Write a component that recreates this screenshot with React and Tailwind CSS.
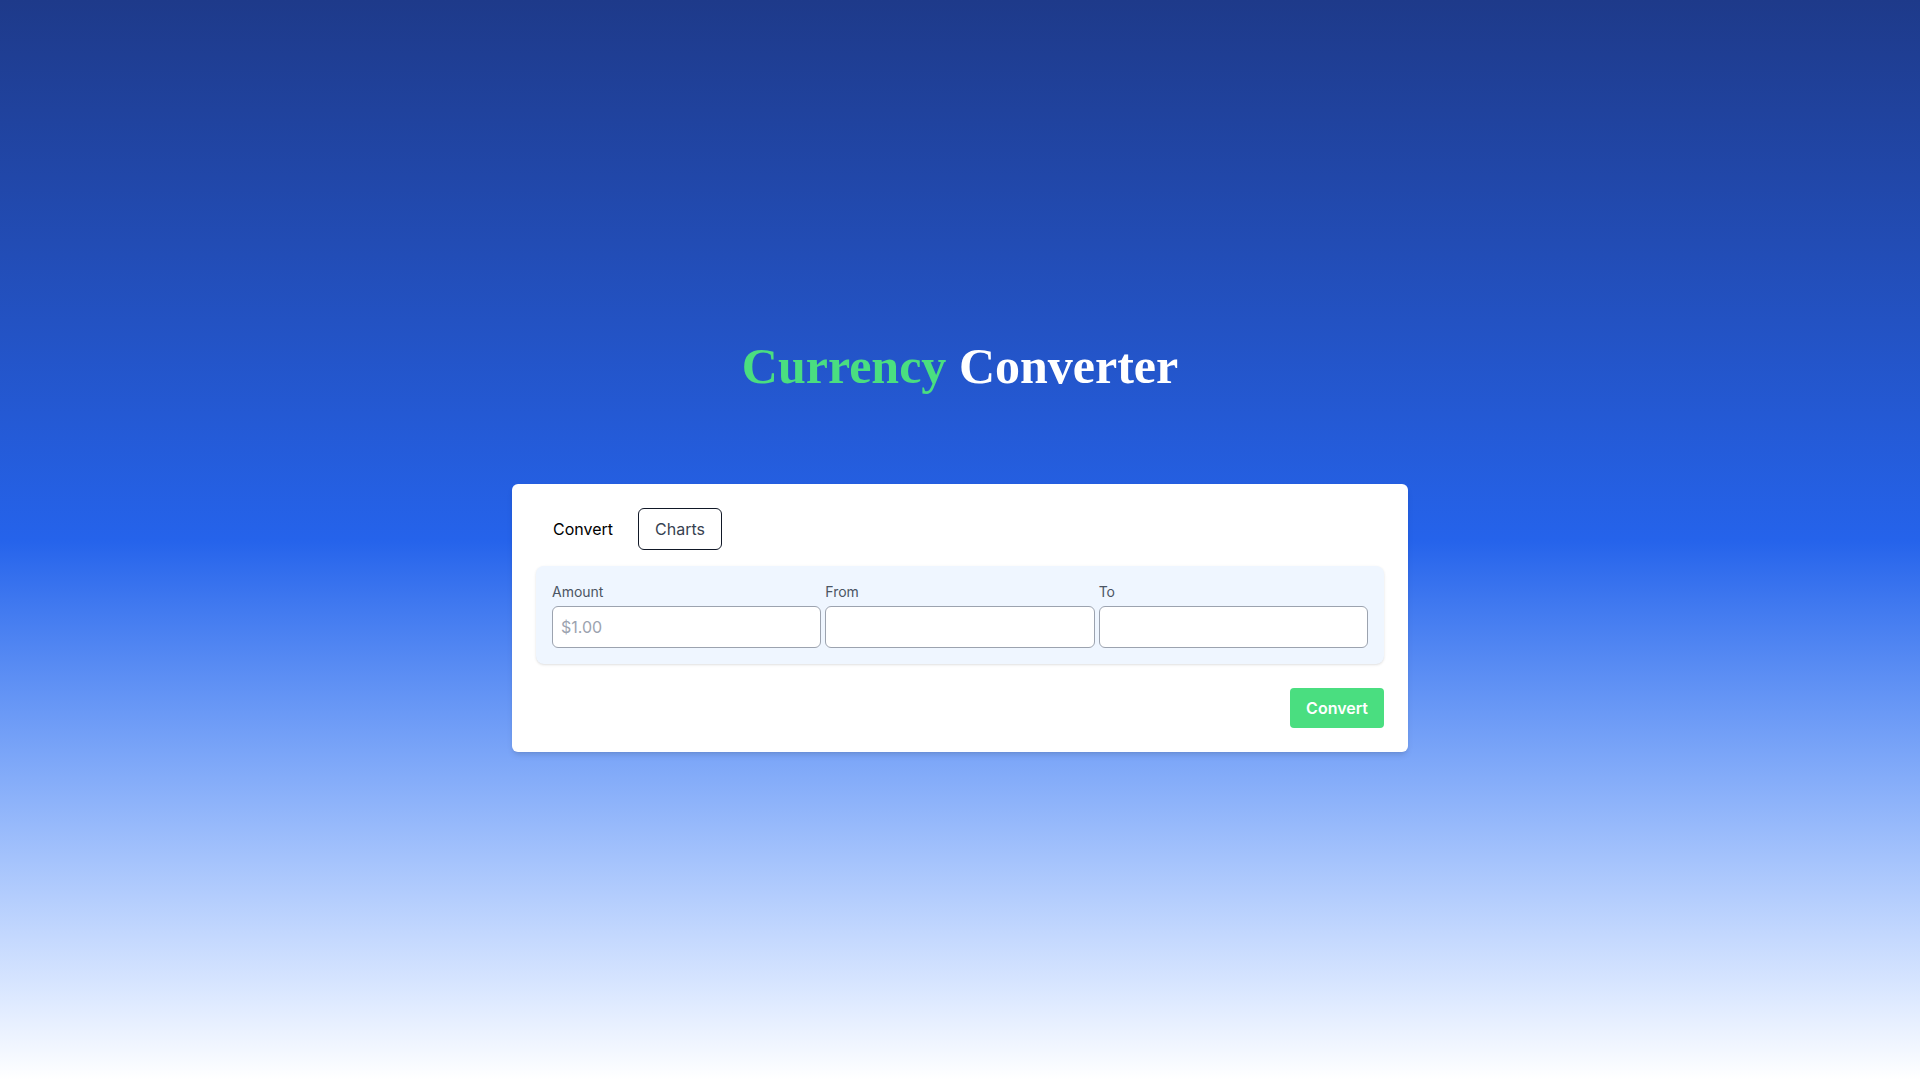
import React, { useState } from "react";

const Field = ({ label, placeholder }) => (
  <div className="flex flex-col">
    <label className="mb-1 text-sm text-[#4b5563]">{label}</label>
    <input
      type="text"
      placeholder={placeholder}
      className="h-[42px] rounded-md border border-[#9ca3af] bg-white px-2 text-base text-[#1f2937] placeholder:text-[#9ca3af] outline-none"
    />
  </div>
);

const App = () => {
  const [tab, setTab] = useState("convert");

  return (
    <div className="min-h-screen w-full bg-gradient-to-b from-[#1e3a8a] via-[#2563eb] to-white font-['Inter',sans-serif]">
      <div className="flex flex-col items-center pt-[341px] pb-10">
        <h1 className="mb-[93px] font-['Liberation_Serif',serif] text-[50px] font-bold leading-none">
          <span className="text-[#4ade80]">Currency</span>{" "}
          <span className="text-white">Converter</span>
        </h1>

        <div className="w-full max-w-4xl rounded-md bg-white p-6 shadow-md">
          <div className="flex gap-2">
            <button
              onClick={() => setTab("convert")}
              className="rounded-md border border-transparent px-4 py-2 text-base text-black"
            >
              Convert
            </button>
            <button
              onClick={() => setTab("charts")}
              className="rounded-md border border-[#111827] px-4 py-2 text-base text-[#374151]"
            >
              Charts
            </button>
          </div>

          <div className="mt-4 rounded-lg bg-[#eff6ff] p-4 shadow-sm">
            <div className="grid grid-cols-3 gap-1">
              <Field label="Amount" placeholder="$1.00" />
              <Field label="From" />
              <Field label="To" />
            </div>
          </div>

          <div className="mt-6 flex justify-end">
            <button className="rounded bg-[#4ade80] px-4 py-2 text-base font-semibold text-white">
              Convert
            </button>
          </div>
        </div>
      </div>
    </div>
  );
};

export default App;
